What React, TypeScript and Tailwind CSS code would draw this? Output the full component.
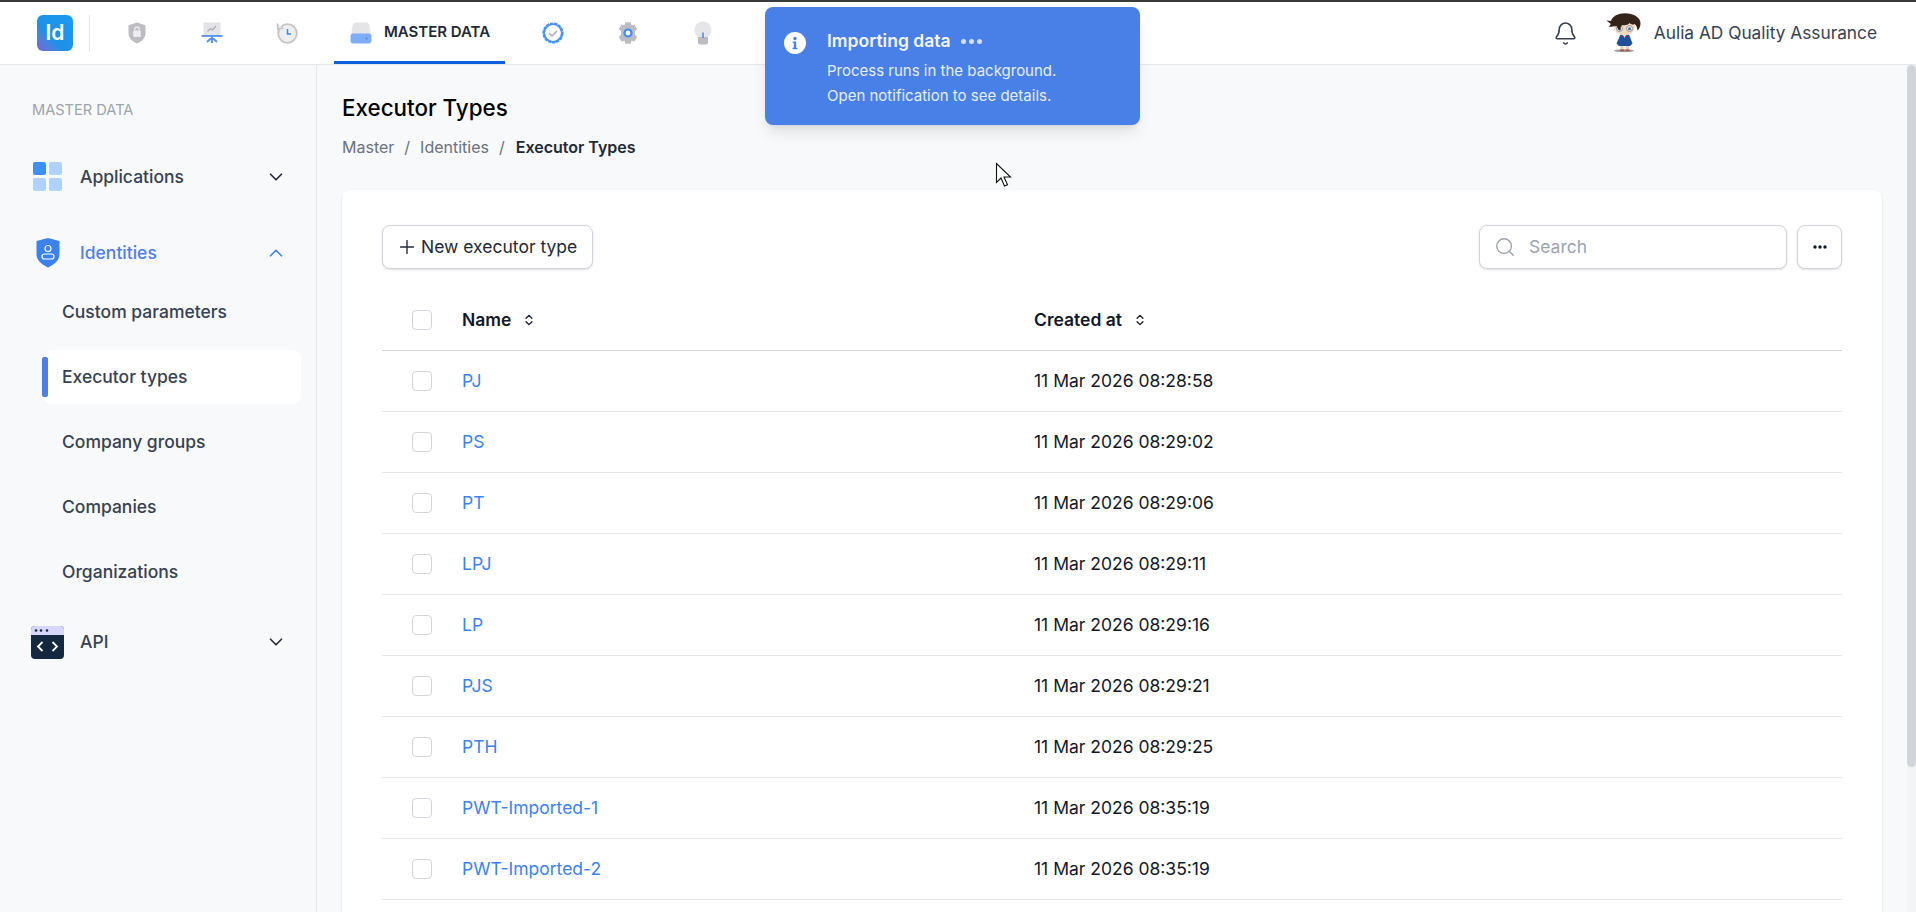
import { Bell, ChevronDown, ChevronUp, ChevronsUpDown, Plus, Search } from 'lucide-react'

const rows = [
  { name: 'PJ', created: '11 Mar 2026 08:28:58' },
  { name: 'PS', created: '11 Mar 2026 08:29:02' },
  { name: 'PT', created: '11 Mar 2026 08:29:06' },
  { name: 'LPJ', created: '11 Mar 2026 08:29:11' },
  { name: 'LP', created: '11 Mar 2026 08:29:16' },
  { name: 'PJS', created: '11 Mar 2026 08:29:21' },
  { name: 'PTH', created: '11 Mar 2026 08:29:25' },
  { name: 'PWT-Imported-1', created: '11 Mar 2026 08:35:19' },
  { name: 'PWT-Imported-2', created: '11 Mar 2026 08:35:19' },
]

function ShieldIcon() {
  return (
    <svg width="22" height="22" viewBox="0 0 22 22">
      <path d="M11 0.500l8.500 2.800v8c0 4.800-3.800 8.300-8.500 10.200-4.700-1.900-8.500-5.400-8.500-10.200v-8z" fill="#bcbcc2" />
      <rect x="7.200" y="8.500" width="7.600" height="6.500" rx="1.200" fill="#ecedf0" />
      <path d="M8.700 8.800V7.300a2.300 2.300 0 0 1 4.600 0v1.500" fill="none" stroke="#ecedf0" strokeWidth="1.300" />
    </svg>
  )
}

function BoardIcon() {
  return (
    <svg width="22" height="22" viewBox="0 0 22 22">
      <rect x="2.500" y="0.500" width="17" height="12.500" fill="#e4e4e8" />
      <path d="M6.500 9.500l3-3 2 1.500 3.500-4" fill="none" stroke="#a9a9b0" strokeWidth="1.200" />
      <rect x="0.500" y="13" width="21" height="1.800" fill="#4f92f9" />
      <path d="M11 14v7M11 15.500l-5 4.500M11 15.500l5 4.500" stroke="#4f92f9" strokeWidth="1.800" fill="none" />
    </svg>
  )
}

function HistoryIcon() {
  return (
    <svg width="22" height="22" viewBox="0 0 22 22">
      <circle cx="11.500" cy="11.500" r="9.300" fill="#eeeef1" stroke="#c3c3c8" strokeWidth="1.800" />
      <path d="M1.500 1.500l.3 5.500 5.500-.8" fill="#eeeef1" stroke="#c3c3c8" strokeWidth="1.800" />
      <path d="M11.500 7v5h3.500" fill="none" stroke="#3f83f8" strokeWidth="1.500" />
    </svg>
  )
}

function DiskIcon() {
  return (
    <svg width="22" height="22" viewBox="0 0 22 22">
      <path d="M6 0.500h10c1.800 0 3 1.200 3.400 3L21 13H1L2.600 3.500C3 1.700 4.200 0.500 6 0.500z" fill="#e5e5e8" />
      <rect x="0.500" y="11.500" width="21" height="10" rx="3" fill="#7eaef9" />
      <circle cx="16.500" cy="16.500" r="1" fill="#4f84e0" />
    </svg>
  )
}

function BadgeIcon() {
  return (
    <svg width="22" height="22" viewBox="0 0 22 22">
      <circle cx="11" cy="11" r="9.400" fill="#fff" stroke="#4592fb" strokeWidth="2.400" strokeDasharray="3.300 0.800" />
      <circle cx="11" cy="11" r="8.700" fill="none" stroke="#4592fb" strokeWidth="1.600" />
      <path d="M7 11.200l3 2.800 5-5" fill="none" stroke="#b9b9be" strokeWidth="1.800" />
    </svg>
  )
}

function GearIcon() {
  return (
    <svg width="22" height="22" viewBox="0 0 22 22">
      <path
        d="M8.300 0.300h5.400l.8 3 3-.8 2.700 4.500-2.200 2.200v3.600l2.200 2.200-2.700 4.500-3-.8-.8 3H8.300l-.8-3-3 .8-2.700-4.500L4 12.800V9.200L1.800 7l2.700-4.500 3 .8z"
        fill="#bcbcc2"
      />
      <circle cx="11" cy="11" r="3.500" fill="#fff" stroke="#3f8cfb" strokeWidth="2.200" />
    </svg>
  )
}

function BulbIcon() {
  return (
    <svg width="22" height="24" viewBox="0 0 22 24">
      <path d="M11 0.500a8.500 8.500 0 0 1 5 15.300V17H6v-1.200A8.500 8.500 0 0 1 11 0.500z" fill="#e6e6e9" />
      <path d="M6 16h10v5.500a2 2 0 0 1-2 2H8a2 2 0 0 1-2-2z" fill="#bcbcc2" />
      <path d="M11 11.500V17" stroke="#3f8cfb" strokeWidth="1.600" />
    </svg>
  )
}

// chibi figure next to the user name
function Avatar() {
  return (
    <svg width="35" height="40" viewBox="0 0 35 40" className="shrink-0">
      <ellipse cx="18" cy="37.800" rx="10" ry="1.500" fill="#9a9a9a" />
      <path d="M14.500 32h3v5h-3zM20 32h3v5h-3z" fill="#e8c9a8" />
      <path d="M14 36.500h4v1.500h-4zM19.500 36.500h4v1.500h-4z" fill="#b5493c" />
      <path d="M13.500 32h10.500v-3H13.500z" fill="#5f86bd" />
      <path d="M14.500 21.500h8.500l3.500 9-2.500 2.500H13l-2.500-2.500z" fill="#1f4f99" />
      <path d="M16.500 21.500h4l-2 3.500z" fill="#f3f3f3" />
      <path d="M16.500 22.500l2 1 2-1v2l-2-1-2 1z" fill="#c8302a" />
      <ellipse cx="18.500" cy="14" rx="10.500" ry="8.500" fill="#f6d8bb" />
      <circle cx="13.500" cy="15.500" r="3" fill="#e8eef5" stroke="#6f7a86" strokeWidth="0.700" />
      <circle cx="23.500" cy="15.500" r="3" fill="#e8eef5" stroke="#6f7a86" strokeWidth="0.700" />
      <circle cx="13.500" cy="15.800" r="1.500" fill="#3d74b8" />
      <circle cx="23.500" cy="15.800" r="1.500" fill="#3d74b8" />
      <path
        d="M0.500 7.500l4.500.5C6.500 3 12 .2 19 .2c8 0 15.500 4 15.500 9.800 0 3-1 5.500-3 7.500-.3-3-1-5-2.800-6.500-1.500 1-3.700.5-5-1-2 2-4.500 2.500-7.500 2-1.200 1-2 3-2 5.500-1.800-1-3-2.500-3.500-4.500L3 14l1.800-3z"
        fill="#352419"
      />
    </svg>
  )
}

function AppsIcon() {
  return (
    <svg width="29" height="30" viewBox="0 0 29 30">
      <rect width="13" height="13" rx="2" fill="#3f8cfb" />
      <rect x="16" width="13" height="13" rx="2" fill="#b3d1fd" />
      <rect y="16" width="13" height="13" rx="2" fill="#b3d1fd" />
      <rect x="16" y="16" width="13" height="13" rx="2" fill="#b3d1fd" />
    </svg>
  )
}

function IdentityIcon() {
  return (
    <svg width="24" height="30" viewBox="0 0 24 30">
      <path d="M12 0l11.500 3v13.500c0 5.500-5 10-11.500 13C5.500 26.500.5 22 .5 16.500V3z" fill="#3b82f0" />
      <circle cx="12" cy="10.500" r="3" fill="none" stroke="#fff" strokeWidth="1.200" />
      <rect x="6" y="16" width="12" height="5" rx="2.500" fill="none" stroke="#fff" strokeWidth="1.200" />
    </svg>
  )
}

function ApiIcon() {
  return (
    <svg width="33" height="33" viewBox="0 0 33 33">
      <rect width="33" height="33" rx="4" fill="#14283f" />
      <path d="M0 9V4a4 4 0 0 1 4-4h25a4 4 0 0 1 4 4v5z" fill="#d9d6fb" />
      <circle cx="5" cy="4.500" r="1.300" fill="#14283f" />
      <circle cx="10" cy="4.500" r="1.300" fill="#14283f" />
      <circle cx="16" cy="4.500" r="1.300" fill="#14283f" />
      <path d="M11.500 16l-4.500 4.500 4.500 4.500M21.500 16l4.500 4.500-4.500 4.500" fill="none" stroke="#fff" strokeWidth="1.800" />
    </svg>
  )
}

function SideGroup({ icon, label, open, active }: { icon: React.ReactNode; label: string; open?: boolean; active?: boolean }) {
  return (
    <div className="flex h-[52px] items-center pl-[32px] pr-[29px]">
      <div className="flex w-[48px] items-center">{icon}</div>
      <span className={`flex-1 text-[17.5px] font-medium ${active ? 'text-[#4f7fee]' : 'text-[#374151]'}`}>{label}</span>
      {open ? <ChevronUp size={22} strokeWidth={1.8} className="text-[#3f83f8]" /> : <ChevronDown size={22} strokeWidth={1.8} className="text-[#1f2937]" />}
    </div>
  )
}

function SubItem({ label, active }: { label: string; active?: boolean }) {
  if (active) {
    return (
      <div className="ml-[44px] mr-[15px] flex h-[54px] items-center rounded-lg bg-white text-[17.5px] font-medium text-[#374151]">
        <div className="-ml-[2px] h-[40px] w-[6px] rounded-[2px] bg-[#4a7fe8]" />
        <span className="ml-[14px]">{label}</span>
      </div>
    )
  }
  return <div className="flex h-[54px] items-center pl-[62px] text-[17.5px] font-medium text-[#374151]">{label}</div>
}

function Sidebar() {
  return (
    <aside className="w-[317px] shrink-0 border-r border-[#e5e7eb] pt-[35px]">
      <div className="pl-[32px] text-[14.6px] leading-5 text-[#9ca3af]">MASTER DATA</div>
      <div className="mt-[31px]">
        <SideGroup icon={<div className="ml-[1px]"><AppsIcon /></div>} label="Applications" />
      </div>
      <div className="mt-[24px]">
        <SideGroup icon={<div className="ml-[4px]"><IdentityIcon /></div>} label="Identities" open active />
      </div>
      <div className="mt-[6px] flex flex-col gap-[11px]">
        <SubItem label="Custom parameters" />
        <SubItem label="Executor types" active />
        <SubItem label="Company groups" />
        <SubItem label="Companies" />
        <SubItem label="Organizations" />
      </div>
      <div className="mt-[17px]">
        <SideGroup icon={<div className="-ml-[1px]"><ApiIcon /></div>} label="API" />
      </div>
    </aside>
  )
}

function Header() {
  return (
    <header className="flex h-[63px] shrink-0 items-center border-b border-[#e5e7eb] bg-white">
      <div className="ml-[37px] flex h-9 w-9 items-center justify-center rounded-[6px] bg-linear-to-tr from-[#6f63cc] via-[#1f8fe8] via-35% to-[#1a9cf0] text-[21px] font-semibold text-white">
        Id
      </div>
      <div className="ml-[16px] h-[37px] w-px bg-[#e5e7eb]" />
      <nav className="ml-[9px] flex h-full items-center">
        <div className="flex w-[75px] justify-center"><ShieldIcon /></div>
        <div className="flex w-[75px] justify-center"><BoardIcon /></div>
        <div className="flex w-[75px] justify-center"><HistoryIcon /></div>
        <div className="mx-[10px] flex h-full w-[171px] items-center justify-center gap-[12px] border-b-[3px] border-[#0b5fdc] pl-[1px] pt-[2px] text-[15px] font-semibold text-[#1f2937]">
          <DiskIcon />
          <span>MASTER DATA</span>
        </div>
        <div className="flex w-[75px] justify-center"><BadgeIcon /></div>
        <div className="flex w-[75px] justify-center"><GearIcon /></div>
        <div className="flex w-[75px] justify-center"><BulbIcon /></div>
      </nav>
      <div className="ml-auto flex items-center pr-[39px]">
        <Bell size={25} strokeWidth={1.5} className="mr-[28px] text-[#374151]" />
        <Avatar />
        <span className="ml-[13px] text-[17.3px] text-[#374151]">Aulia AD Quality Assurance</span>
      </div>
    </header>
  )
}

function Table() {
  return (
    <div className="mt-[21px] text-[17.5px]">
      <div className="flex h-[61px] items-center border-b border-[#d1d5db] pl-[30px] font-semibold text-[#111827]">
        <div className="h-5 w-5 rounded-[4px] border border-[#d1d5db]" />
        <div className="ml-[30px] flex w-[572px] items-center">
          Name
          <ChevronsUpDown size={14} strokeWidth={2.2} className="ml-[11px]" />
        </div>
        <div className="flex items-center">
          Created at
          <ChevronsUpDown size={14} strokeWidth={2.2} className="ml-[11px]" />
        </div>
      </div>
      {rows.map((row) => (
        <div key={row.name} className="flex h-[61px] items-center border-b border-[#e5e7eb] pl-[30px]">
          <div className="h-5 w-5 rounded-[4px] border border-[#d1d5db]" />
          <div className="ml-[30px] w-[572px] text-[#3b82f6]">{row.name}</div>
          <div className="text-[#111827]">{row.created}</div>
        </div>
      ))}
    </div>
  )
}

function ImportToast() {
  return (
    <div className="absolute left-[765px] top-[7px] z-20 flex h-[118px] w-[375px] rounded-lg bg-[#4880e8] pl-[19px] pt-[22px] shadow-lg">
      <svg width="22" height="22" viewBox="0 0 22 22" className="mt-[3px] shrink-0">
        <circle cx="11" cy="11" r="11" fill="#fff" />
        <circle cx="11" cy="6.500" r="1.700" fill="#4880e8" />
        <path d="M8.800 9.500h3.400v6.200h1.300v1.500H8.500v-1.500h1.300v-4.700h-1z" fill="#4880e8" />
      </svg>
      <div className="ml-[21px]">
        <div className="flex items-center text-[17.5px] leading-6 font-semibold text-[#f3f6fd]">
          Importing data
          <span className="ml-[10px] flex gap-[3px]">
            <span className="h-[5px] w-[5px] rounded-full bg-[#d5e0f8]" />
            <span className="h-[5px] w-[5px] rounded-full bg-[#d5e0f8]" />
            <span className="h-[5px] w-[5px] rounded-full bg-[#d5e0f8]" />
          </span>
        </div>
        <div className="mt-[5px] text-[15px] leading-[25px] text-[#e6edfb]">
          <div>Process runs in the background.</div>
          <div>Open notification to see details.</div>
        </div>
      </div>
    </div>
  )
}

function MouseCursor() {
  return (
    <svg width="18" height="26" viewBox="0 0 18 26" className="absolute left-[995px] top-[162px] z-20">
      <path d="M1.500 1.500v19l4.500-4.500 3.500 8 3-1.300-3.500-7.700h6.500z" fill="#fff" stroke="#111" strokeWidth="1.100" />
    </svg>
  )
}

export default function App() {
  return (
    <div className="relative flex h-screen flex-col overflow-hidden bg-[#f8f9fb] font-['Inter',sans-serif]">
      <div className="h-[2px] shrink-0 bg-[#3a3a3a]" />
      <Header />
      <div className="flex min-h-0 flex-1">
        <Sidebar />
        <main className="min-w-0 flex-1 px-[25px] pt-[27px]">
          <h1 className="text-[22.4px] leading-8 font-medium text-black">Executor Types</h1>
          <div className="mt-[11px] flex text-base leading-6 text-[#6b7280]">
            <span>Master</span>
            <span className="mx-[10px]">/</span>
            <span>Identities</span>
            <span className="ml-[10px] mr-[11px]">/</span>
            <span className="font-semibold text-[#1f2937]">Executor Types</span>
          </div>
          <section className="mt-[31px] h-[800px] rounded-lg bg-white px-[40px] pt-[35px] shadow-sm">
            <div className="flex items-center">
              <button className="flex h-[44px] items-center rounded-lg border border-[#d1d5db] bg-white pl-[13px] pr-[15px] text-[17.5px] text-[#1f2937] shadow-sm">
                <Plus size={22} strokeWidth={1.5} className="mr-[3px]" />
                New executor type
              </button>
              <div className="ml-auto flex h-[44px] w-[308px] items-center rounded-lg border border-[#d1d5db] bg-white pl-[14px] shadow-sm">
                <Search size={22} strokeWidth={1.5} className="shrink-0 text-[#9ca3af]" />
                <input placeholder="Search" className="ml-[13px] min-w-0 flex-1 bg-transparent text-[17.5px] outline-none placeholder:text-[#9ca3af]" />
              </div>
              <button className="ml-[10px] flex h-[44px] w-[45px] items-center justify-center rounded-lg border border-[#d1d5db] bg-white shadow-sm">
                <svg width="14" height="4" viewBox="0 0 14 4">
                  <circle cx="2" cy="2" r="1.700" fill="#111827" />
                  <circle cx="7" cy="2" r="1.700" fill="#111827" />
                  <circle cx="12" cy="2" r="1.700" fill="#111827" />
                </svg>
              </button>
            </div>
            <Table />
          </section>
        </main>
        <div className="w-[9px] shrink-0 bg-[#f3f4f6]">
          <div className="h-[702px] rounded-full bg-[#d1d5db]" />
        </div>
      </div>
      <ImportToast />
      <MouseCursor />
    </div>
  )
}
